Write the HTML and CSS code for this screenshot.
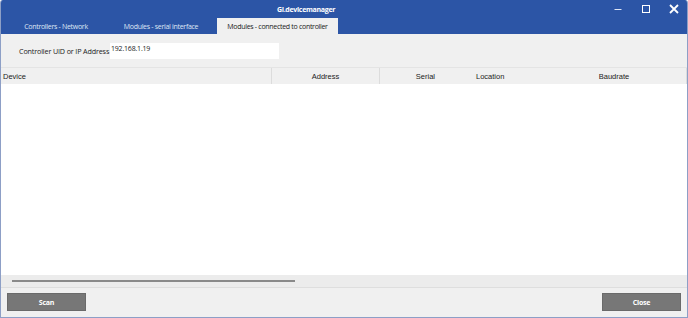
FILE: index.html
```html
<!DOCTYPE html>
<html>
<head>
  <meta charset="UTF-8" />
  <title>GI.devicemanager</title>
  <link rel="stylesheet" href="styles.css">
</head>
<body>
  <div class="window">
    <!-- Title bar with tabs -->
    <div class="titlebar">
      <div class="title-row">
        <span class="title">GI.devicemanager</span>
        <div class="controls">
          <svg width="10" height="10" viewBox="0 0 10 10"><path d="M1.5 5.5h7" stroke="#dfe6f5" stroke-width="1"/></svg>
          <svg width="10" height="10" viewBox="0 0 10 10"><rect x="1.5" y="1.5" width="7" height="7" fill="none" stroke="#fff" stroke-width="1"/></svg>
          <svg width="10" height="10" viewBox="0 0 10 10"><path d="M1 1L9 9M9 1L1 9" stroke="#fff" stroke-width="1.8"/></svg>
        </div>
      </div>
      <div class="tabs">
        <div class="tab tab-network">Controllers - Network</div>
        <div class="tab tab-serial">Modules - serial interface</div>
        <div class="tab tab-connected active">Modules - connected to controller</div>
      </div>
    </div>

    <div class="content">
      <div class="address-row">
        <label>Controller UID or IP Address</label>
        <input type="text" value="192.168.1.19" />
      </div>

      <div class="grid">
        <div class="grid-header">
          <div class="col col-device">Device</div>
          <div class="col col-address">Address</div>
          <div class="col col-serial">Serial</div>
          <div class="col col-location">Location</div>
          <div class="col col-baud">Baudrate</div>
        </div>
        <div class="grid-body"></div>
        <div class="hscroll"><div class="thumb"></div></div>
      </div>

      <div class="footer">
        <button>Scan</button>
        <button>Close</button>
      </div>
    </div>
  </div>
</body>
</html>
```

FILE: styles.css
```css
body {
  margin: 0;
  background: #fff;
  font-family: 'Open Sans', sans-serif;
}

.window {
  width: 688px;
  height: 318px;
  box-sizing: border-box;
  border: 1px solid #8d9fc6;
  border-top: none;
  border-radius: 3px 3px 0 0;
  display: flex;
  flex-direction: column;
  overflow: hidden;
  background: #f0f0f0;
}

.titlebar {
  background: #2c55a6;
  height: 34px;
  display: flex;
  flex-direction: column;
}

.title-row {
  height: 18px;
  display: flex;
  align-items: center;
  justify-content: center;
  padding-right: 76px;
  position: relative;
}

.title {
  color: #fff;
  font-weight: bold;
  font-size: 7px;
  letter-spacing: -0.3px;
  white-space: nowrap;
}

.controls {
  position: absolute;
  right: 8px;
  top: 4px;
  display: flex;
  gap: 18px;
}

.tabs {
  display: flex;
  height: 16px;
  padding-left: 6px;
}

.tab {
  color: #dfe6f5;
  font-size: 7px;
  letter-spacing: -0.3px;
  white-space: nowrap;
  display: flex;
  align-items: center;
  justify-content: center;
}

.tab-network { width: 98px; }
.tab-serial { width: 112px; }
.tab-connected { width: 121px; }

.tab.active {
  background: #f0f0f0;
  color: #222;
}

.content {
  display: flex;
  flex-direction: column;
}

.address-row {
  display: flex;
  align-items: center;
  height: 16px;
  margin-top: 9px;
  padding-left: 18px;
}

.address-row label {
  font-size: 7.2px;
  letter-spacing: -0.15px;
  white-space: nowrap;
  color: #222;
  width: 91px;
}

.address-row input {
  width: 169px;
  height: 16px;
  box-sizing: border-box;
  border: none;
  background: #fff;
  font-family: 'Open Sans', sans-serif;
  font-size: 7px;
  letter-spacing: -0.2px;
  padding: 0 1px 5px;
  color: #222;
}

.grid {
  margin-top: 8px;
  display: flex;
  flex-direction: column;
}

.grid-header {
  display: flex;
  height: 16px;
  background: #f0f0f0;
  font-family: 'Liberation Sans', sans-serif;
  font-size: 7.5px;
  color: #222;
  border-top: 1px solid #e4e4e4;
}

.col {
  display: flex;
  align-items: center;
  padding: 0 2px;
  box-sizing: border-box;
  border-right: 1px solid #dcdcdc;
}

.col-device { width: 271px; }
.col-address { width: 108px; justify-content: center; }
.col-serial { width: 94px; justify-content: flex-end; padding-right: 39px; border-right: none; }
.col-location { width: 121px; border-right: none; }
.col-baud { width: 92px; justify-content: center; padding-right: 55px; }

.grid-body {
  height: 191px;
  background: #fff;
}

.hscroll {
  height: 12px;
  background: #ececec;
  display: flex;
  align-items: center;
  padding-left: 11px;
  border-bottom: 1px solid #dedede;
}

.thumb {
  width: 283px;
  height: 2px;
  background: #8a8a8a;
}

.footer {
  display: flex;
  justify-content: space-between;
  padding: 5px 6px 0 6px;
}

.footer button {
  width: 79px;
  height: 18px;
  background: #777;
  border: 1px solid #6a6a6a;
  color: #fff;
  font-family: 'Open Sans', sans-serif;
  font-weight: bold;
  font-size: 7px;
  letter-spacing: -0.2px;
  padding: 0;
}
```
